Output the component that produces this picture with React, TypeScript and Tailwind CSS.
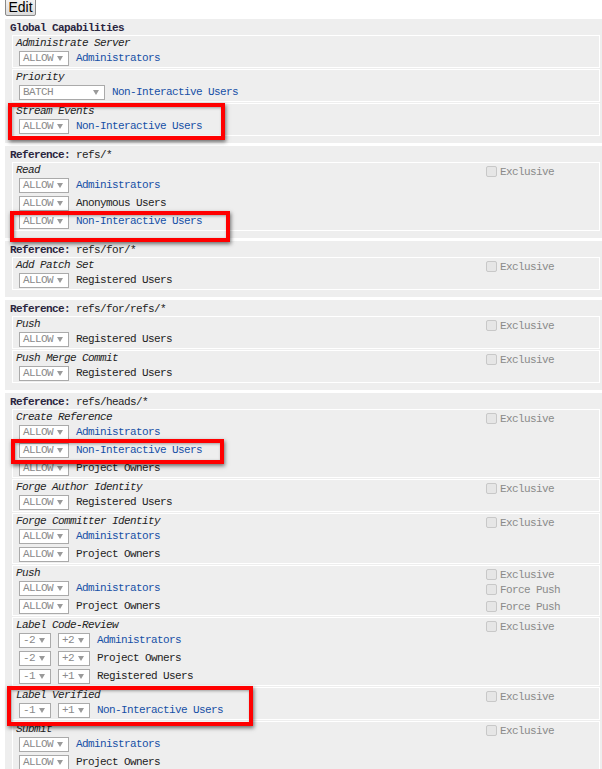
import React from "react";

type Rule = {
  selects: { label: string; w: number }[];
  group: string;
  link?: boolean;
  force?: boolean;
};

type Perm = {
  name: string;
  exclusive?: boolean;
  rules: Rule[];
};

type Section = {
  ref?: string;
  title?: string;
  perms: Perm[];
};

const allow = (group: string, link = false, force = false): Rule => ({
  selects: [{ label: "ALLOW", w: 50 }],
  group,
  link,
  force,
});

const label = (lo: string, hi: string, group: string, link = false): Rule => ({
  selects: [
    { label: lo, w: 32 },
    { label: hi, w: 32 },
  ],
  group,
  link,
});

const SECTIONS: Section[] = [
  {
    title: "Global Capabilities",
    perms: [
      { name: "Administrate Server", rules: [allow("Administrators", true)] },
      {
        name: "Priority",
        rules: [{ selects: [{ label: "BATCH", w: 86 }], group: "Non-Interactive Users", link: true }],
      },
      { name: "Stream Events", rules: [allow("Non-Interactive Users", true)] },
    ],
  },
  {
    ref: "refs/*",
    perms: [
      {
        name: "Read",
        exclusive: true,
        rules: [
          allow("Administrators", true),
          allow("Anonymous Users"),
          allow("Non-Interactive Users", true),
        ],
      },
    ],
  },
  {
    ref: "refs/for/*",
    perms: [{ name: "Add Patch Set", exclusive: true, rules: [allow("Registered Users")] }],
  },
  {
    ref: "refs/for/refs/*",
    perms: [
      { name: "Push", exclusive: true, rules: [allow("Registered Users")] },
      { name: "Push Merge Commit", exclusive: true, rules: [allow("Registered Users")] },
    ],
  },
  {
    ref: "refs/heads/*",
    perms: [
      {
        name: "Create Reference",
        exclusive: true,
        rules: [
          allow("Administrators", true),
          allow("Non-Interactive Users", true),
          allow("Project Owners"),
        ],
      },
      { name: "Forge Author Identity", exclusive: true, rules: [allow("Registered Users")] },
      {
        name: "Forge Committer Identity",
        exclusive: true,
        rules: [allow("Administrators", true), allow("Project Owners")],
      },
      {
        name: "Push",
        exclusive: true,
        rules: [allow("Administrators", true, true), allow("Project Owners", false, true)],
      },
      {
        name: "Label Code-Review",
        exclusive: true,
        rules: [
          label("-2", "+2", "Administrators", true),
          label("-2", "+2", "Project Owners"),
          label("-1", "+1", "Registered Users"),
        ],
      },
      {
        name: "Label Verified",
        exclusive: true,
        rules: [label("-1", "+1", "Non-Interactive Users", true)],
      },
      {
        name: "Submit",
        exclusive: true,
        rules: [allow("Administrators", true), allow("Project Owners")],
      },
    ],
  },
];

// red annotation boxes drawn over the screenshot
const MARKS = [
  { left: 8, top: 103, w: 217, h: 37 },
  { left: 10, top: 211, w: 220, h: 31 },
  { left: 11, top: 439, w: 213, h: 25 },
  { left: 7, top: 686, w: 246, h: 40 },
];

function Select({ label, w }: { label: string; w: number }) {
  return (
    <div
      className="h-[15px] border border-[#aaaaaa] bg-white flex items-center justify-between pl-[3px] pr-[5px] text-[#8a8a8a] shrink-0"
      style={{ width: w }}
    >
      <span className="pt-px">{label}</span>
      <svg width="6" height="5" viewBox="0 0 6 5">
        <path d="M0 0 L6 0 L3 5 Z" fill="#9a9a9a" />
      </svg>
    </div>
  );
}

function Check({ text }: { text: string }) {
  return (
    <div className="flex items-center gap-[3px] text-[#8a8a8a]">
      <span className="w-[11px] h-[11px] rounded-[2px] border border-[#c8c8c8] bg-[#e6e6e6] shrink-0" />
      <span className="pt-px">{text}</span>
    </div>
  );
}

function PermBox({ perm }: { perm: Perm }) {
  const hasForce = perm.rules.some((r) => r.force);
  return (
    <div className="ml-[7px] w-[588px] border border-white mb-px flex">
      <div className="flex-1">
        <div className="h-[13px] pt-[2px] leading-[11px] pl-[3px] italic text-[#222]">{perm.name}</div>
        {perm.rules.map((r, i) => (
          <div key={i} className="h-[18px] flex items-center pl-[6px] gap-[7px]">
            {r.selects.map((s, j) => (
              <Select key={j} label={s.label} w={s.w} />
            ))}
            <span className={`pt-px ${r.link ? "text-[#1650a6]" : "text-[#222]"}`}>{r.group}</span>
          </div>
        ))}
      </div>
      {perm.exclusive && (
        <div className="w-[113px] pt-[2px]">
          <div className="h-[13px] flex items-center">
            <Check text="Exclusive" />
          </div>
          {hasForce &&
            perm.rules.map((r, i) => (
              <div key={i} className="h-[17px] flex items-center">
                {r.force && <Check text="Force Push" />}
              </div>
            ))}
        </div>
      )}
    </div>
  );
}

export default function App() {
  return (
    <div className="relative w-[602px] h-[769px] overflow-hidden bg-white font-['Liberation_Mono','DejaVu_Sans_Mono',monospace] text-[11px] tracking-[-0.6px] leading-none">
      <button className="ml-[5px] -mt-[2px] block h-[18px] w-[31px] border border-[#8a8a8a] rounded-[2px] bg-gradient-to-b from-[#f4f4f4] to-[#dcdcdc] font-['Liberation_Sans',Arial,sans-serif] text-[14px] tracking-normal leading-[16px] text-black">
        Edit
      </button>
      <div className="mt-[3px]">
        {SECTIONS.map((sec, i) => (
          <div key={i} className="ml-[5px] w-[600px] bg-[#eeeeee] pt-px pb-[6px] mb-[3px]">
            <div className="h-[15px] pt-[2px] leading-[13px] pl-[5px] text-[#222]">
              {sec.title ? (
                <span className="font-bold text-[#2a2540]">{sec.title}</span>
              ) : (
                <>
                  <span className="font-bold text-[#2a2540]">Reference:</span> {sec.ref}
                </>
              )}
            </div>
            {sec.perms.map((p, j) => (
              <PermBox key={j} perm={p} />
            ))}
          </div>
        ))}
      </div>
      {MARKS.map((m, i) => (
        <div
          key={i}
          className="absolute border-[4px] border-[#ff0000] shadow-[1px_2px_4px_rgba(0,0,0,0.55),inset_1px_1px_3px_rgba(0,0,0,0.35)] pointer-events-none"
          style={{ left: m.left, top: m.top, width: m.w, height: m.h }}
        />
      ))}
    </div>
  );
}
